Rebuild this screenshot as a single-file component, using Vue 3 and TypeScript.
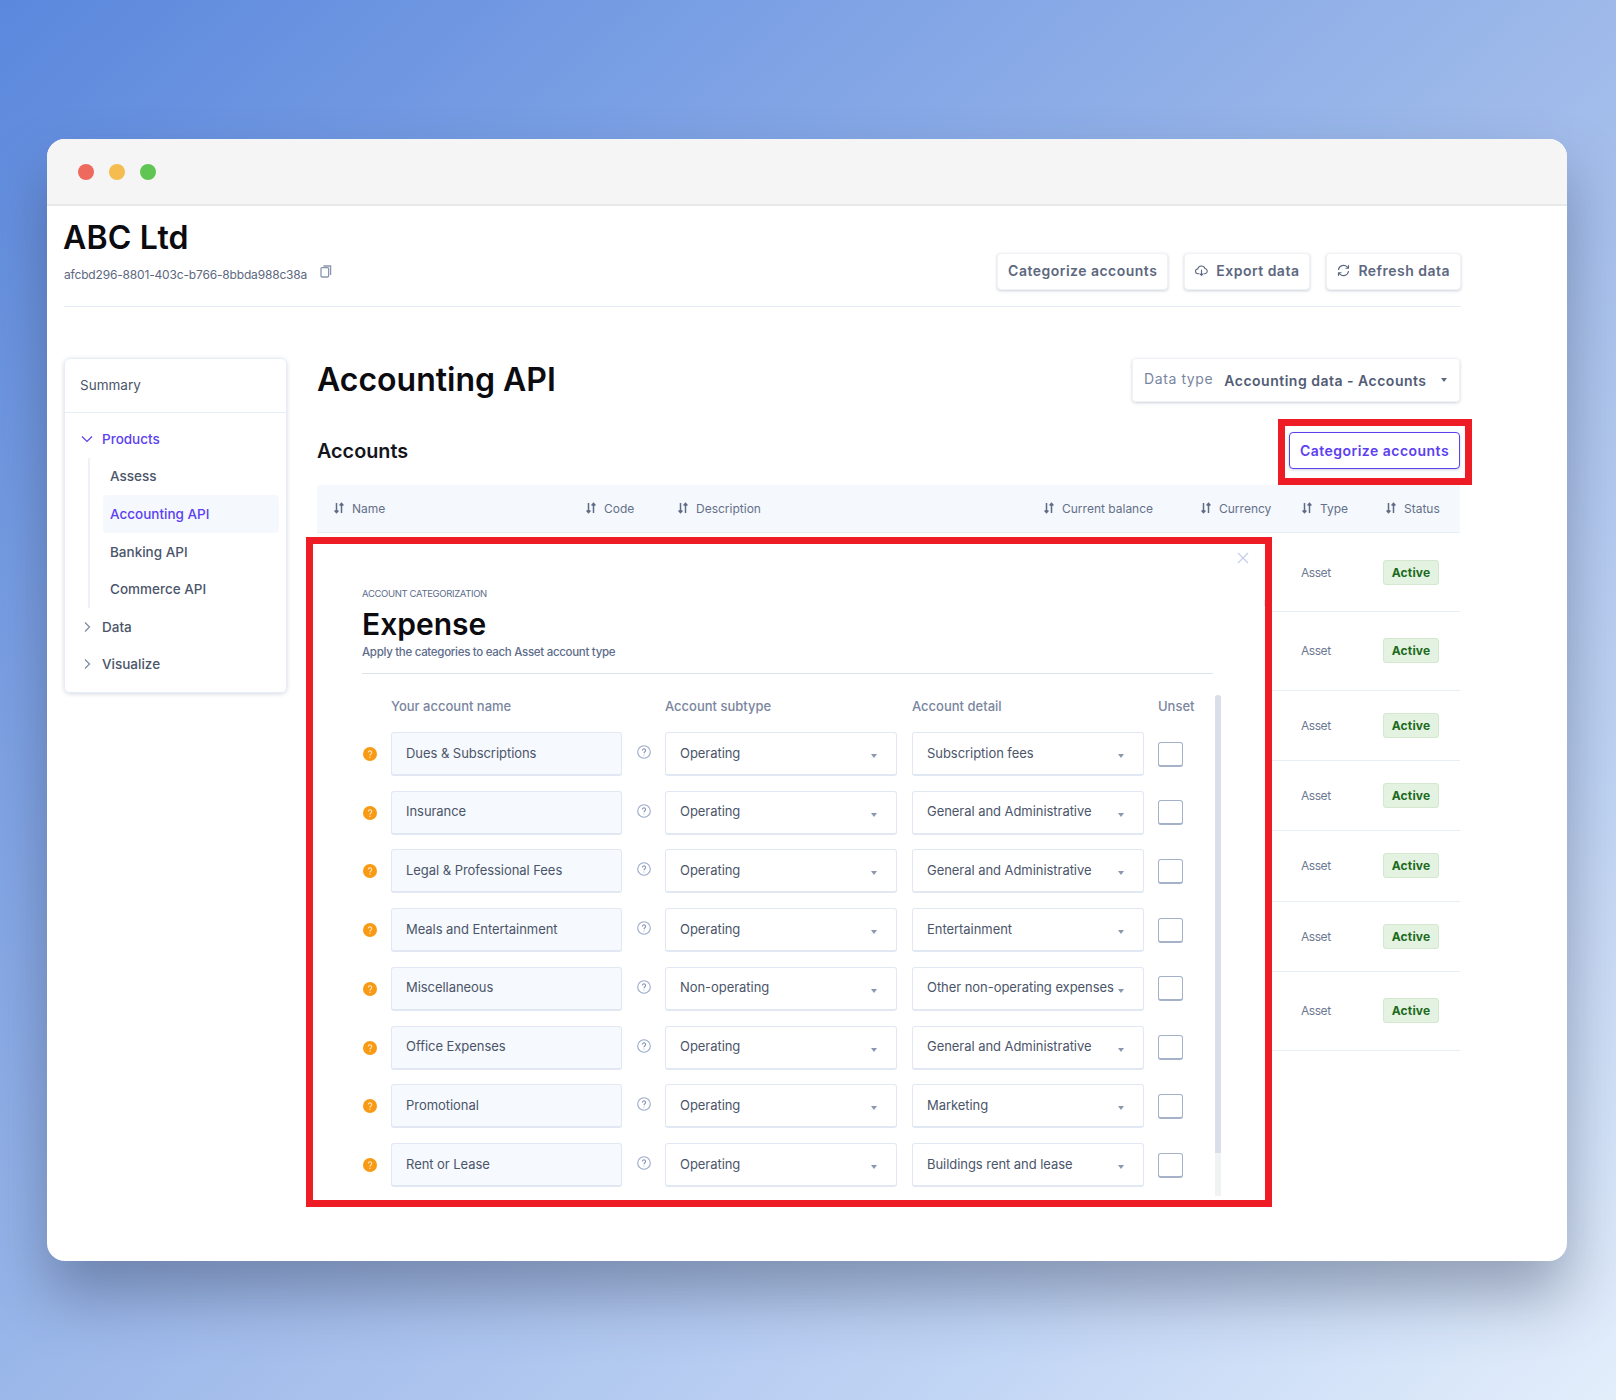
<script setup lang="ts">
const nav = ['Assess', 'Accounting API', 'Banking API', 'Commerce API']
const heads = [
  { label: 'Name' }, { label: 'Code' }, { label: 'Description' },
  { label: 'Current balance' }, { label: 'Currency' }, { label: 'Type' }, { label: 'Status' },
]
const rowHeights = [79, 78.5, 70, 70, 71, 70, 79]
const rows = [
  ['Dues & Subscriptions', 'Operating', 'Subscription fees'],
  ['Insurance', 'Operating', 'General and Administrative'],
  ['Legal & Professional Fees', 'Operating', 'General and Administrative'],
  ['Meals and Entertainment', 'Operating', 'Entertainment'],
  ['Miscellaneous', 'Non-operating', 'Other non-operating expenses'],
  ['Office Expenses', 'Operating', 'General and Administrative'],
  ['Promotional', 'Operating', 'Marketing'],
  ['Rent or Lease', 'Operating', 'Buildings rent and lease'],
]
</script>

<template>
  <div class="page">
    <div class="window">
      <div class="titlebar">
        <i class="dot red"></i><i class="dot yellow"></i><i class="dot green"></i>
      </div>
      <div class="content">
        <header class="head">
          <div class="head-left">
            <h1>ABC Ltd</h1>
            <div class="id">
              <span>afcbd296-8801-403c-b766-8bbda988c38a</span>
              <svg class="copy" viewBox="0 0 12 13" width="12" height="13" fill="none" stroke="#8b96ad" stroke-width="1.3">
                <rect x="1" y="2.6" width="7.6" height="9.4" rx="1" />
                <path d="M3.4 1h7.2v9" />
              </svg>
            </div>
          </div>
          <div class="head-actions">
            <button class="btn">Categorize accounts</button>
            <button class="btn">
              <svg viewBox="0 0 14 14" width="13" height="13" fill="none" stroke="#5d6880" stroke-width="1.2" stroke-linecap="round" stroke-linejoin="round">
                <path d="M4 10.5H3.4A2.6 2.6 0 0 1 3 5.3a4 4 0 0 1 7.7-.5 2.9 2.9 0 0 1 .2 5.7H10" />
                <path d="M7 6.5v5.5M5.4 10.6 7 12.2l1.6-1.6" />
              </svg>
              Export data
            </button>
            <button class="btn">
              <svg viewBox="0 0 14 14" width="13" height="13" fill="none" stroke="#5d6880" stroke-width="1.2" stroke-linecap="round" stroke-linejoin="round">
                <path d="M1.6 6A5.5 5.5 0 0 1 11 3.2l1.4 1.4M12.4 1.8v2.8H9.6" />
                <path d="M12.4 8A5.5 5.5 0 0 1 3 10.8L1.6 9.4M1.6 12.2V9.4h2.8" />
              </svg>
              Refresh data
            </button>
          </div>
        </header>

        <div class="body">
          <aside class="side">
            <div class="side-top">Summary</div>
            <div class="side-list">
              <div class="item purple">
                <svg class="chev" viewBox="0 0 12 12" width="12" height="12" fill="none" stroke="#5b3ff0" stroke-width="1.2"><path d="M1 3.5 6 8.5 11 3.5" /></svg>
                Products
              </div>
              <div class="sub">
                <div v-for="n in nav" :key="n" class="sub-item" :class="{ on: n === 'Accounting API' }">{{ n }}</div>
              </div>
              <div class="item">
                <svg class="chev" viewBox="0 0 12 12" width="12" height="12" fill="none" stroke="#7c88a0" stroke-width="1.2"><path d="M4 1.5 8.5 6 4 10.5" /></svg>
                Data
              </div>
              <div class="item">
                <svg class="chev" viewBox="0 0 12 12" width="12" height="12" fill="none" stroke="#7c88a0" stroke-width="1.2"><path d="M4 1.5 8.5 6 4 10.5" /></svg>
                Visualize
              </div>
            </div>
          </aside>

          <main class="main">
            <div class="title-row">
              <h2>Accounting API</h2>
              <div class="dtype">
                <span class="dt-label">Data type</span>
                <span class="dt-value">Accounting data - Accounts</span>
                <i class="caret dark"></i>
              </div>
            </div>
            <div class="acc-row">
              <h3>Accounts</h3>
              <div class="mark-wrap">
                <button class="btn primary">Categorize accounts</button>
              </div>
            </div>
            <div class="thead">
              <div v-for="h in heads" :key="h.label" class="th">
                <svg viewBox="0 0 12 12" width="12" height="12" fill="none" stroke="#5f6b85" stroke-width="1.5">
                  <path d="M3.5 1v9.6M1.6 8.6l1.9 2 1.9-2" />
                  <path d="M8.5 11V1.4M6.6 3.4l1.9-2 1.9 2" />
                </svg>
                {{ h.label }}
              </div>
            </div>
            <div v-for="(rh, i) in rowHeights" :key="i" class="tr" :style="{ height: rh + 'px' }">
              <span class="asset">Asset</span>
              <span class="badge">Active</span>
            </div>

            <section class="modal">
              <svg class="close" viewBox="0 0 12 12" width="12" height="12" fill="none" stroke="#c6cee8" stroke-width="1.2"><path d="M1 1l10 10M11 1 1 11" /></svg>
              <i class="stray"></i>
              <div class="m-head">
                <div class="eyebrow">ACCOUNT CATEGORIZATION</div>
                <div class="m-title">Expense</div>
                <div class="m-sub">Apply the categories to each Asset account type</div>
              </div>
              <div class="grid labels">
                <span></span>
                <span>Your account name</span>
                <span></span>
                <span>Account subtype</span>
                <span>Account detail</span>
                <span>Unset</span>
              </div>
              <div class="list">
                <div v-for="r in rows" :key="r[0]" class="grid">
                  <svg class="warn" viewBox="0 0 14 14" width="14" height="14">
                    <circle cx="7" cy="7" r="7" fill="#f99a14" />
                    <path d="M5.3 5.5a1.7 1.7 0 1 1 2.7 1.4c-.7.4-1 .7-1 1.5" fill="none" stroke="#ffe6c2" stroke-width="1.1" />
                    <circle cx="7" cy="10.3" r=".7" fill="#ffe6c2" />
                  </svg>
                  <div class="field name">{{ r[0] }}</div>
                  <svg class="help" viewBox="0 0 14 14" width="14" height="14" fill="none" stroke="#9aaac9" stroke-width="1.1">
                    <circle cx="7" cy="7" r="6.3" />
                    <path d="M5.4 5.5a1.6 1.6 0 1 1 2.5 1.3c-.6.4-.9.7-.9 1.4" stroke="#8495b6" />
                    <circle cx="7" cy="10" r=".5" fill="#8495b6" stroke="none" />
                  </svg>
                  <div class="field sel">{{ r[1] }}<i class="caret"></i></div>
                  <div class="field sel detail">{{ r[2] }}<i class="caret"></i></div>
                  <i class="check"></i>
                </div>
              </div>
              <div class="scroll"><div class="thumb"></div></div>
            </section>
          </main>
        </div>
      </div>
    </div>
  </div>
</template>

<style>
body { margin: 0; }
</style>

<style scoped>
.page {
  width: 1616px;
  height: 1400px;
  padding: 139px 48px 0 47px;
  box-sizing: border-box;
  background: linear-gradient(138deg, #5b88dd 0%, #7ba0e4 24%, #a3bdeb 55%, #c0d4f4 78%, #e3eefb 100%);
  font-family: Inter, "Liberation Sans", sans-serif;
  color: #4b556a;
  overflow: hidden;
}
.window {
  width: 1520px;
  height: 1122px;
  background: #fff;
  border-radius: 18px;
  box-shadow: 0 34px 60px rgba(40, 50, 75, .38);
  overflow: hidden;
}
.titlebar {
  height: 65px;
  background: #f5f5f5;
  border-bottom: 2px solid #e8e9eb;
  display: flex;
  align-items: center;
  gap: 15px;
  padding-left: 31px;
}
.dot { width: 16px; height: 16px; border-radius: 50%; }
.red { background: #ee6a5f; }
.yellow { background: #f5bd4f; }
.green { background: #61c554; }
.content { padding: 0 106px 0 17px; }
.head {
  height: 100px;
  border-bottom: 1px solid #e6ecf5;
  display: flex;
  justify-content: space-between;
  align-items: flex-start;
}
h1 {
  margin: 12px 0 0 -1px;
  font-size: 32px;
  line-height: 40px;
  font-weight: 600;
  color: #0b0b10;
  letter-spacing: .2px;
}
.id {
  margin-top: 9px;
  display: flex;
  align-items: flex-start;
  font-size: 12px;
  line-height: 16px;
  color: #5c6880;
  letter-spacing: -.17px;
}
.copy { margin-left: 13px; margin-top: -2px; }
.head-actions { display: flex; gap: 16px; margin-top: 47px; }
.btn {
  height: 37px;
  padding: 0 10px 2px;
  border: 1px solid #f0f2f6;
  border-radius: 4px;
  background: #fff;
  box-shadow: 0 1px 3px rgba(70, 85, 120, .28);
  font: 600 14px/1 Inter, "Liberation Sans", sans-serif;
  color: #5d6880;
  display: flex;
  align-items: center;
  gap: 8px;
  letter-spacing: .48px;
  white-space: nowrap;
}
.body { display: flex; margin-top: 51px; }
.side {
  width: 223px;
  height: 335px;
  box-sizing: border-box;
  flex: none;
  border: 1px solid #e7edf7;
  border-radius: 6px;
  box-shadow: 0 1px 4px rgba(70, 85, 120, .22);
  font-size: 13.5px;
}
.side-top {
  height: 54px;
  border-bottom: 1px solid #e7edf7;
  display: flex;
  align-items: center;
  padding: 0 0 2px 15px;
  color: #4b556a;
  box-sizing: border-box;
}
.side-list { padding-top: 7px; }
.item {
  height: 37.6px;
  display: flex;
  align-items: center;
  padding-left: 16px;
  gap: 9px;
  font-weight: 500;
}
.chev { flex: none; }
.purple { color: #5b3ff0; }
.sub { margin-left: 23px; border-left: 2px solid #eef1f6; }
.sub-item {
  height: 37.6px;
  display: flex;
  align-items: center;
  margin-left: 13px;
  margin-right: 7px;
  padding-left: 7px;
  border-radius: 4px;
  font-weight: 500;
}
.sub-item.on { background: #f5f8fc; color: #5b3ff0; }
.main { position: relative; margin-left: 30px; width: 1143px; flex: none; }
.title-row {
  height: 44px;
  display: flex;
  justify-content: space-between;
  align-items: center;
}
h2 {
  margin: 0;
  font-size: 32px;
  font-weight: 600;
  color: #0b0b10;
  line-height: 44px;
}
.dtype {
  width: 328px;
  height: 44px;
  box-sizing: border-box;
  padding: 0 10px 0 11px;
  border: 1px solid #f0f2f6;
  border-radius: 4px;
  box-shadow: 0 1px 3px rgba(70, 85, 120, .28);
  display: flex;
  align-items: center;
  font-size: 14px;
}
.dt-label { color: #7a86a0; margin-top: -4px; letter-spacing: .6px; }
.dt-value { margin-left: 11px; font-weight: 600; color: #525d75; margin-right: auto; letter-spacing: .5px; }
.acc-row {
  margin-top: 30px;
  height: 37px;
  display: flex;
  justify-content: space-between;
  align-items: center;
}
h3 { margin: 0; font-size: 19.8px; font-weight: 600; color: #14151c; }
.mark-wrap { position: relative; }
.mark-wrap::after {
  content: "";
  position: absolute;
  inset: -13px -12px -16px -11px;
  border: 7px solid #ee1c25;
  pointer-events: none;
}
.primary {
  width: 171px;
  padding: 0;
  justify-content: center;
  border: 1.5px solid #5b3ff0;
  color: #5b3ff0;
}
.thead {
  margin-top: 16px;
  height: 48px;
  background: #f5f8fc;
  border-bottom: 1px solid #e8eef6;
  box-sizing: border-box;
  padding: 0 0 1px 16px;
  display: grid;
  grid-template-columns: 252px 92px 366px 157px 101px 84px 1fr;
  align-items: center;
  font-size: 12px;
  color: #64708a;
}
.th { display: flex; align-items: center; gap: 7px; }
.tr {
  box-sizing: border-box;
  border-bottom: 1px solid #e8eef6;
  display: grid;
  padding-left: 984px;
  grid-template-columns: 82px 56px;
  align-items: center;
  font-size: 12px;
}
.asset { color: #6d7891; letter-spacing: -.45px; }
.badge {
  height: 25px;
  box-sizing: border-box;
  background: #e4f2e1;
  border: 1px solid #d3e8cf;
  border-radius: 3px;
  color: #1b6a20;
  font-weight: 700;
  letter-spacing: .2px;
  display: flex;
  align-items: center;
  justify-content: center;
}
.modal {
  position: absolute;
  left: -11px;
  top: 179px;
  width: 966px;
  height: 670px;
  box-sizing: border-box;
  border: 7px solid #ee1c25;
  background: #fff;
  padding: 43px 0 0 49px;
  overflow: hidden;
  font-size: 13px;
}
.close { position: absolute; left: 924px; top: 8px; }
.stray {
  position: absolute;
  left: 951px;
  top: 56px;
  width: 4px;
  height: 6px;
  background: #e6e9ef;
}
.m-head { width: 851px; height: 87px; box-sizing: border-box; border-bottom: 1px solid #dde3ec; }
.eyebrow {
  font-size: 9.5px;
  line-height: 14px;
  color: #5d6c8b;
  letter-spacing: -.35px;
}
.m-title {
  margin-top: 5px;
  font-size: 30px;
  line-height: 36px;
  font-weight: 600;
  color: #0b0b10;
}
.m-sub {
  margin-top: 2px;
  font-size: 11.5px;
  line-height: 16px;
  font-weight: 500;
  color: #5d6c8b;
  letter-spacing: -.3px;
}
.grid {
  display: grid;
  grid-template-columns: 29px 231px 43px 247px 246px 25px;
  align-items: center;
}
.labels {
  margin-top: 24px;
  height: 16px;
  color: #7a86a0;
  font-weight: 500;
  white-space: nowrap;
}
.list { margin-top: 18px; display: flex; flex-direction: column; gap: 14.74px; }
.list .grid { height: 44px; }
.warn { margin-left: 1px; }
.field {
  height: 44px;
  box-sizing: border-box;
  border: 1px solid #e1e8f3;
  border-bottom-width: 2px;
  border-radius: 3px;
  display: flex;
  align-items: center;
  padding: 0 0 2px 14px;
  color: #4b556a;
  position: relative;
  white-space: nowrap;
  letter-spacing: -.05px;
}
.name { background: #f6f9fd; }
.help { margin-top: -4px; justify-self: center; }
.sel { margin-right: 15px; }
.detail { margin-right: 14px; }
.caret {
  position: absolute;
  right: 19px;
  top: 21px;
  border-left: 3px solid transparent;
  border-right: 3px solid transparent;
  border-top: 4px solid #8a97b0;
}
.caret.dark { position: static; border-top-color: #5d6880; margin-right: 2px; }
.check {
  width: 25px;
  height: 25px;
  box-sizing: border-box;
  border: 1px solid #a4b1c8;
  border-bottom-width: 2px;
  border-radius: 3px;
}
.scroll {
  position: absolute;
  left: 902px;
  top: 151px;
  width: 6px;
  height: 501px;
  background: #f1f2f4;
  border-radius: 3px 3px 0 0;
}
.thumb { height: 458px; background: #d9dee8; border-radius: 3px 3px 0 0; }
</style>
